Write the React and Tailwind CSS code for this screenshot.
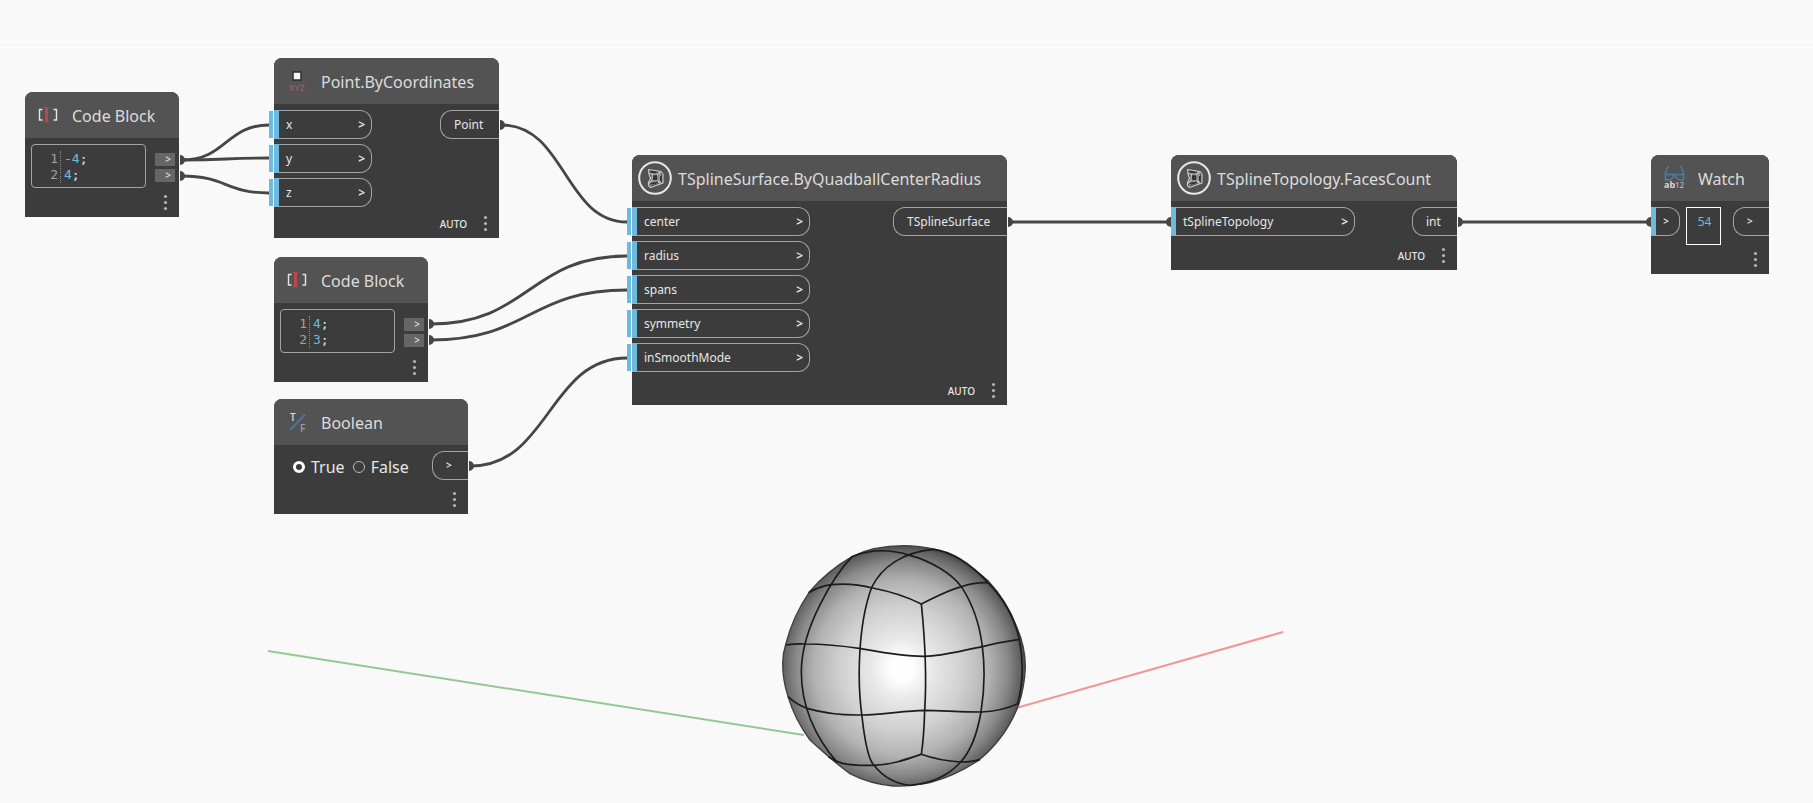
const DOTS = [0, 6, 12];

function MenuDots() {
  return (
    <button type="button" aria-label="Node menu" className="block">
      <svg width="5" height="17" viewBox="0 0 5 17" fill="#b4b4b4">
        {DOTS.map((d) => (
          <circle key={d} cx="2.5" cy={2.5 + d} r="1.6" />
        ))}
      </svg>
    </button>
  );
}

function CodeIcon() {
  return (
    <svg width="22" height="18" viewBox="0 0 22 18" fill="none">
      <path d="M5.500 3.500H2.500v10.500H5.500M16.500 3.500H19.500v10.500H16.500" stroke="#e4e4e4" strokeWidth="1.400" />
      <path d="M6.500 1.500h6M6.500 16h6" stroke="#a8464a" strokeWidth="1.200" />
      <path d="M9.500 1.500v14.500" stroke="#bb474c" strokeWidth="3" />
    </svg>
  );
}

function PointIcon() {
  return (
    <svg width="24" height="28" viewBox="0 0 24 28">
      <rect x="7" y="5" width="8" height="8" fill="#f4f4f4" stroke="#2e2e2e" strokeWidth="1.500" />
      <text x="11" y="24" textAnchor="middle" fontSize="9" fontWeight="600" fill="#93606a" className="font-['Open_Sans',sans-serif]">XYZ</text>
    </svg>
  );
}

function BoolIcon() {
  return (
    <svg width="26" height="28" viewBox="0 0 26 28">
      <path d="M19 6.500L4.500 21.500" stroke="#4f7899" strokeWidth="1.800" />
      <text x="4" y="13" fontSize="10" fontWeight="600" fill="#dadada" className="font-['Open_Sans',sans-serif]">T</text>
      <text x="14" y="24" fontSize="10" fontWeight="600" fill="#a0a0a0" className="font-['Open_Sans',sans-serif]">F</text>
    </svg>
  );
}

function SplineIcon() {
  return (
    <svg width="34" height="34" viewBox="0 0 34 34" fill="none">
      <circle cx="17" cy="17" r="15.800" stroke="#e8e8e8" strokeWidth="2" />
      <g stroke="#cfcfcf" strokeWidth="1.100" strokeLinejoin="round">
        <path d="M10.500 8.500L23 10.500L25 13V22L12.500 26.500L10.500 24.500V21.500L12.500 17.500L11 13Z" />
        <path d="M11 12.500L14.500 13H19.800L22 10.800M14.500 13L13.800 20L10.500 22.500M19.800 13L20 19.800L22.500 22.500M13.800 20L20 19.800" />
        <path d="M22 11V22.500M12.500 24L22 21" />
      </g>
      <path d="M13 10.500l5 .9M22.800 15v5M13.500 23.200l6.500-1.900M16 15.500h2.500v2.500H16z" stroke="#2c2c2c" strokeWidth="1.500" />
    </svg>
  );
}

function WatchIcon() {
  return (
    <svg width="26" height="28" viewBox="0 0 26 28" fill="none">
      <path d="M6 2Q1.500 6 2.500 17M17 2q4.500 4 3.500 15M2.500 10.500h18M3 15.500Q8 17.500 11.500 11Q15 17.500 20 15.500" stroke="#4f7c9f" strokeWidth="1.400" />
      <text x="1" y="24" fontSize="9" fontWeight="700" fill="#dadada" className="font-['Open_Sans',sans-serif]">ab</text>
      <text x="12" y="24" fontSize="8" fontWeight="600" fill="#b0b0b0" className="font-['Open_Sans',sans-serif]">12</text>
    </svg>
  );
}

function Node({ place, title, icon, wideIcon, auto, children }) {
  return (
    <section className={`absolute flex flex-col rounded-t-lg bg-[#3c3c3c] text-[#e6e6e6] ${place}`}>
      <header className={`flex h-[46px] shrink-0 items-center rounded-t-lg bg-[#535353] ${wideIcon ? 'gap-1.5 pl-1.5' : 'pl-3'}`}>
        <span className={wideIcon ? 'shrink-0' : 'flex w-[35px] shrink-0'}>{icon}</span>
        <h2 className="whitespace-nowrap pt-0.5 text-base leading-6 text-[#dcdcdc]">{title}</h2>
      </header>
      <div className="flex grow items-start justify-between pt-1.5">{children}</div>
      <footer className="flex items-center justify-end gap-4 pb-1.5 pr-[11px]">
        {auto && <span className="text-[10px] font-medium leading-4">AUTO</span>}
        <MenuDots />
      </footer>
    </section>
  );
}

function Inputs({ names, width, linked }) {
  return (
    <ul className={`flex flex-col gap-[5px] ${width}`}>
      {names.map((name) => (
        <li key={name} className="relative">
          {!linked && <span className="absolute -left-[5px] top-px h-[27px] w-1 bg-[#6ebadf]" />}
          <button
            type="button"
            aria-label={name || 'input'}
            className="flex h-[29px] w-full items-center justify-between rounded-r-xl border border-l-0 border-[#a4a4a4] pr-1.5 text-xs"
          >
            <span className="-my-px flex h-[29px] items-center">
              <span className="mr-[7px] h-[29px] w-[5px] bg-[#6ebadf]" />
              {name}
            </span>
            <span className={name ? 'font-semibold' : 'pr-1 text-[10px] font-semibold'}>&gt;</span>
          </button>
        </li>
      ))}
    </ul>
  );
}

function Output({ name, width, small }) {
  return (
    <button
      type="button"
      className={`flex h-[29px] items-center rounded-l-xl border border-r-0 border-[#a4a4a4] pl-[13px] ${small ? 'text-[10px] font-semibold' : 'text-xs'} ${width}`}
    >
      {name}
    </button>
  );
}

function CodeBlock({ place, lines }) {
  return (
    <Node place={place} title="Code Block" icon={<CodeIcon />}>
      <div className="ml-1.5 flex h-[44px] w-[115px] items-center rounded border border-[#a4a4a4] pt-0.5 font-['DejaVu_Sans_Mono',monospace] text-[13px] leading-4">
        <ol className="w-[29px] border-r border-dotted border-[#8a8a8a] pr-0.5 text-right text-[#a3a39a]">
          {lines.map((line, i) => (
            <li key={line}>{i + 1}</li>
          ))}
        </ol>
        <ol className="pl-[3px]">
          {lines.map((line) => (
            <li key={line}>
              <span className="text-[#6ebadf]">{line}</span>;
            </li>
          ))}
        </ol>
      </div>
      <div className="mr-1 mt-[9px] flex flex-col gap-[3px]">
        {lines.map((line) => (
          <button key={line} type="button" aria-label={`Output ${line}`} className="flex h-[13px] w-5 items-center justify-end bg-[#666666] pr-1 text-[10px] font-medium">
            &gt;
          </button>
        ))}
      </div>
    </Node>
  );
}

function Choice({ label, defaultChecked }) {
  return (
    <label className="flex items-center gap-1.5 text-base leading-6">
      <input
        type="radio"
        name="boolean"
        defaultChecked={defaultChecked}
        className="size-3 appearance-none rounded-full border border-[#b9b9b9] checked:border-[3px] checked:border-white"
      />
      {label}
    </label>
  );
}

const WIRES = [
  'M182 160C226 160 226 125 269 125',
  'M182 160C226 160 226 158 269 158',
  'M182 176C226 176 226 193 269 193',
  'M502 125C565 125 565 222 627 222',
  'M431 324C529 324 529 256 627 256',
  'M431 340C529 340 529 290 627 290',
  'M471 466C549 466 549 358 627 358',
  'M1010 222H1168',
  'M1460 222H1648',
];

const OUT_PINS = [[180, 160], [180, 176], [500, 125], [429, 324], [429, 340], [469, 466], [1008, 222], [1458, 222]];
const IN_PINS = [[1171, 222], [1651, 222]];

function Wires() {
  return (
    <svg className="absolute inset-0 size-full" fill="none">
      <path d="M268 651L804 735" stroke="#93c993" strokeWidth="2" />
      <path d="M1283 632L1016 708" stroke="#f29595" strokeWidth="2" />
      {WIRES.map((d) => (
        <path key={d} d={d} stroke="#464646" strokeWidth="2.800" />
      ))}
      {OUT_PINS.map(([x, y]) => (
        <path key={`${x}-${y}`} d={`M${x} ${y - 5}a5 5 0 0 1 0 10z`} fill="#464646" />
      ))}
      {IN_PINS.map(([x, y]) => (
        <path key={x} d={`M${x} ${y - 5}a5 5 0 0 0 0 10z`} fill="#464646" />
      ))}
    </svg>
  );
}

const MESH = [
  'M276 80C225 134 124 290 124 425C124 530 165 620 232 698',
  'M520 58C430 66 365 110 335 172C292 290 292 460 306 560C315 640 325 690 342 706C370 742 410 762 450 766',
  'M276 80C340 54 400 60 450 76C510 92 575 130 604 170C640 225 660 290 667 350C676 420 672 490 663 546C652 610 635 660 602 696C570 732 520 760 450 766',
  'M484 222C494 320 500 450 494 541Q492 620 484 673',
  'M520 58C580 65 640 110 684 158C740 215 765 270 778 328C790 390 790 460 772 524',
  'M146 188Q180 168 214 164C260 160 300 164 338 174C390 184 440 200 484 222C530 200 560 182 604 170Q645 156 684 158',
  'M78 345Q110 340 139 342C190 342 250 348 303 356C370 368 430 380 494 379C550 379 610 360 667 350Q720 336 780 328',
  'M84 500Q110 524 141 535C200 552 250 556 306 555C370 555 430 542 494 541C550 542 610 546 663 546Q725 544 776 520',
  'M205 680Q222 693 248 700C280 707 310 707 342 706C395 704 440 688 484 673C520 686 560 694 602 696Q635 696 660 688',
];

const OUTLINE =
  'M276 80Q340 47 430 47Q530 48 590 84Q640 112 684 152Q740 212 770 290Q796 350 796 410Q794 470 776 524Q740 620 660 688Q590 736 510 758Q450 770 400 768Q330 762 268 730Q215 690 150 630Q105 570 84 500Q68 450 68 400Q68 370 78 340Q98 260 148 186Q200 124 276 80Z';

function Quadball() {
  return (
    <svg className="absolute left-[760px] top-[530px] h-[273px] w-[290px]" viewBox="0 0 870 819" fill="none" role="img" aria-label="Quadball surface">
      <defs>
        <radialGradient id="shade" gradientUnits="userSpaceOnUse" cx="425" cy="416" r="375">
          <stop offset="0" stopColor="#ffffff" />
          <stop offset="0.100" stopColor="#fdfdfd" />
          <stop offset="0.250" stopColor="#e8e8e8" />
          <stop offset="0.500" stopColor="#cfcfcf" />
          <stop offset="0.700" stopColor="#b2b2b2" />
          <stop offset="0.850" stopColor="#898989" />
          <stop offset="0.950" stopColor="#616161" />
          <stop offset="1" stopColor="#434343" />
        </radialGradient>
      </defs>
      <path d={OUTLINE} fill="url(#shade)" stroke="#3f3f3f" strokeWidth="4" />
      {MESH.map((d) => (
        <path key={d} d={d} stroke="#1c1c1c" strokeWidth="5" strokeLinejoin="round" />
      ))}
    </svg>
  );
}

export default function App() {
  return (
    <main className="relative min-h-screen overflow-hidden bg-[#f9f9f9] font-['Noto_Sans',sans-serif]">
      <div className="h-12 border-b border-[#fdfdfd]" />
      <Wires />
      <Quadball />

      <CodeBlock place="left-[25px] top-[92px] h-[125px] w-[154px]" lines={['-4', '4']} />

      <Node place="left-[274px] top-[58px] h-[180px] w-[225px]" title="Point.ByCoordinates" icon={<PointIcon />} auto>
        <Inputs names={['x', 'y', 'z']} width="w-[98px]" />
        <Output name="Point" width="w-[59px]" />
      </Node>

      <CodeBlock place="left-[274px] top-[257px] h-[125px] w-[154px]" lines={['4', '3']} />

      <Node place="left-[274px] top-[399px] h-[115px] w-[194px]" title="Boolean" icon={<BoolIcon />}>
        <fieldset className="ml-[19px] flex items-center gap-2 pt-1">
          <Choice label="True" defaultChecked />
          <Choice label="False" />
        </fieldset>
        <Output name=">" width="w-9" small />
      </Node>

      <Node place="left-[632px] top-[155px] h-[250px] w-[375px]" title="TSplineSurface.ByQuadballCenterRadius" icon={<SplineIcon />} wideIcon auto>
        <Inputs names={['center', 'radius', 'spans', 'symmetry', 'inSmoothMode']} width="w-[178px]" />
        <Output name="TSplineSurface" width="w-[114px]" />
      </Node>

      <Node place="left-[1171px] top-[155px] h-[115px] w-[286px]" title="TSplineTopology.FacesCount" icon={<SplineIcon />} wideIcon auto>
        <Inputs names={['tSplineTopology']} width="w-[184px]" linked />
        <Output name="int" width="w-[45px]" />
      </Node>

      <Node place="left-[1651px] top-[155px] h-[119px] w-[118px]" title="Watch" icon={<WatchIcon />}>
        <div className="flex gap-1.5">
          <Inputs names={['']} width="w-[29px]" linked />
          <output className="flex h-[38px] w-[35px] justify-center border border-white pl-0.5 pt-1.5 text-xs text-[#6ebadf]">54</output>
        </div>
        <Output name=">" width="w-9" small />
      </Node>
    </main>
  );
}
